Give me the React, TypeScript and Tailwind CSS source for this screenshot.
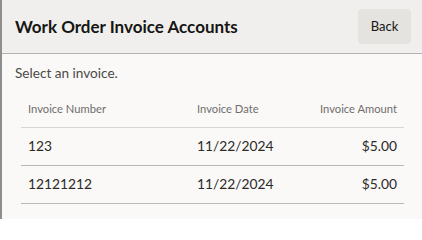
import React from "react";

const rows = [
  { num: "123", date: "11/22/2024", amount: "$5.00" },
  { num: "12121212", date: "11/22/2024", amount: "$5.00" },
];

export default function App() {
  return (
    <div
      className="w-[422px] h-[219px] bg-[#faf9f8] border-l-2 border-[#8e8e8e] flex flex-col overflow-hidden"
      style={{ fontFamily: 'Lato, "Noto Sans", sans-serif' }}
    >
      <div className="h-[54px] shrink-0 bg-[#f0efed] border-b border-[#b3b3b3] flex items-center justify-between pl-[13px] pr-[11px]">
        <h1 className="text-[17px] font-bold text-[#161513] leading-none">
          Work Order Invoice Accounts
        </h1>
        <button className="h-[35px] w-[53px] rounded-[4px] bg-[#e4e3e0] text-[13px] text-[#161513]">
          Back
        </button>
      </div>
      <div className="pt-[10px] pl-[13px] pr-[18px]">
        <p className="text-[13.6px] leading-[18px] text-[#4a4946]">Select an invoice.</p>
        <div className="mt-[9px] ml-[6px]">
          <div className="grid grid-cols-[169px_1fr_auto] h-[37px] items-center border-b border-[#d6d5d3] text-[11.2px] text-[#6f6e6b]">
            <div className="px-[7px]">Invoice Number</div>
            <div className="px-[7px]">Invoice Date</div>
            <div className="px-[7px] text-right">Invoice Amount</div>
          </div>
          {rows.map((r) => (
            <div
              key={r.num}
              className="grid grid-cols-[169px_1fr_auto] h-[38px] items-center border-b border-[#b9b8b5] text-[13.8px] text-[#2b2a28]"
            >
              <div className="px-[7px]">{r.num}</div>
              <div className="px-[7px]">{r.date}</div>
              <div className="px-[7px] text-right">{r.amount}</div>
            </div>
          ))}
        </div>
      </div>
    </div>
  );
}
